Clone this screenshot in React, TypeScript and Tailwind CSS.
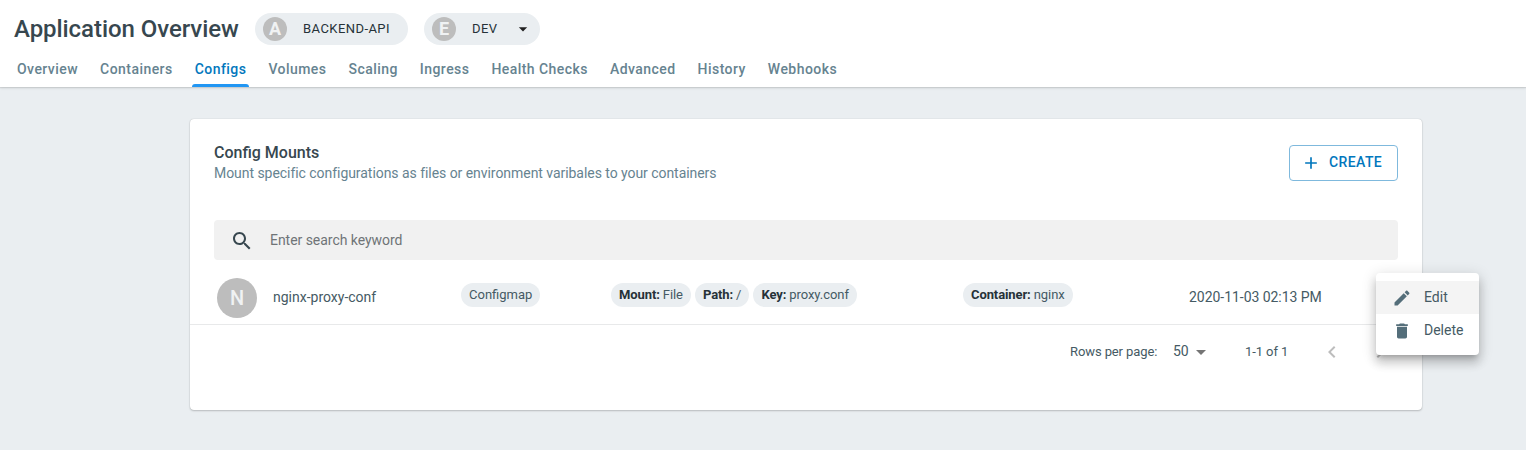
import type { ReactNode } from "react";

const tabs = [
  "Overview",
  "Containers",
  "Configs",
  "Volumes",
  "Scaling",
  "Ingress",
  "Health Checks",
  "Advanced",
  "History",
  "Webhooks",
];

function Icon({ d, className }: { d: string; className: string }) {
  return (
    <svg viewBox="0 0 24 24" fill="currentColor" className={"shrink-0 " + className} aria-hidden="true">
      <path d={d} />
    </svg>
  );
}

const SEARCH =
  "M15.5 14h-.79l-.28-.27C15.41 12.59 16 11.11 16 9.5 16 5.91 13.09 3 9.5 3S3 5.91 3 9.5 5.91 16 9.5 16c1.61 0 3.09-.59 4.23-1.57l.27.28v.79l5 4.99L20.49 19l-4.99-5zm-6 0C7.01 14 5 11.99 5 9.5S7.01 5 9.5 5 14 7.01 14 9.5 11.99 14 9.5 14z";
const ADD = "M19 13h-6v6h-2v-6H5v-2h6V5h2v6h6v2z";
const DROP = "M7 10l5 5 5-5z";
const LEFT = "M15.41 16.59L10.83 12l4.58-4.59L14 6l-6 6 6 6z";
const RIGHT = "M8.59 16.59L13.17 12 8.59 7.41 10 6l6 6-6 6z";
const EDIT =
  "M3 17.25V21h3.75L17.81 9.94l-3.75-3.75L3 17.25zM20.71 7.04c.39-.39.39-1.02 0-1.41l-2.34-2.34c-.39-.39-1.02-.39-1.41 0l-1.83 1.83 3.75 3.75 1.83-1.83z";
const DELETE = "M6 19c0 1.1.9 2 2 2h8c1.1 0 2-.9 2-2V7H6v12zM19 4h-3.5l-1-1h-5l-1 1H5v2h14V4z";

function Chip({ label, children }: { label?: string; children: ReactNode }) {
  return (
    <span className="flex h-6 items-center rounded-full bg-[#eaeef1] px-2 text-[13px] leading-6 text-[#455a64]">
      {label && <b className="mr-[3px] font-bold tracking-[-0.1px] text-[#263238]">{label}</b>}
      <span className={label ? "tracking-[-0.05px]" : ""}>{children}</span>
    </span>
  );
}

function Header() {
  return (
    <header className="relative h-[87px] bg-white shadow-[0_1px_1px_rgba(0,0,0,0.08),0_1px_3px_rgba(0,0,0,0.1)]">
      <div className="flex h-[57px] items-center pl-[14px]">
        <h1 className="w-[241px] text-2xl font-medium tracking-[-0.06px] whitespace-nowrap text-[#37474f]">
          Application Overview
        </h1>
        <div className="flex h-8 w-[153px] items-center rounded-full bg-[#eaeef1] pl-2">
          <span className="flex size-6 items-center justify-center rounded-full bg-[#bdbdbd] text-lg leading-6 font-bold text-[#f0f2f3]">
            A
          </span>
          <span className="ml-4 text-[13px] tracking-[0.44px] text-[#263238]">BACKEND-API</span>
        </div>
        <div className="ml-4 flex h-8 w-[116px] items-center rounded-full bg-[#eaeef1] pl-2">
          <span className="flex size-6 items-center justify-center rounded-full bg-[#bdbdbd] text-lg leading-6 font-bold text-[#f0f2f3]">
            E
          </span>
          <span className="ml-4 w-[41px] text-[13px] tracking-[0.44px] text-[#263238]">DEV</span>
          <Icon d={DROP} className="size-5 text-[#212121]" />
        </div>
      </div>
      <nav className="flex h-[30px] gap-4 pl-[14px]">
        {tabs.map((t) => (
          <a
            key={t}
            className={
              t === "Configs"
                ? "flex flex-col justify-between px-[3px] text-sm font-medium tracking-[0.45px] whitespace-nowrap text-[#0277bd]"
                : "flex flex-col justify-between px-[3px] text-sm font-medium tracking-[0.45px] whitespace-nowrap text-[#668390]"
            }
          >
            <span className="mt-[2px]">{t}</span>
            {t === "Configs" && <span className="-mx-[3px] h-[3px] rounded-t bg-[#2196f3]" />}
          </a>
        ))}
      </nav>
    </header>
  );
}

function Menu() {
  return (
    <div className="absolute top-[273px] left-[1376px] h-[82px] w-[103px] rounded bg-white pt-2 text-sm text-[#455a64] shadow-[0_5px_5px_-3px_rgba(0,0,0,0.2),0_8px_10px_1px_rgba(0,0,0,0.14),0_3px_14px_2px_rgba(0,0,0,0.12)]">
      <div className="flex h-[33px] items-center bg-[#f4f4f4] pl-4">
        <Icon d={EDIT} className="size-5 text-[#546e7a]" />
        <span className="mb-px ml-3 leading-5">Edit</span>
      </div>
      <div className="flex h-[33px] items-center pl-4">
        <Icon d={DELETE} className="size-5 text-[#546e7a]" />
        <span className="mb-[2px] ml-3 leading-5">Delete</span>
      </div>
    </div>
  );
}

export default function App() {
  return (
    <div className="relative h-[450px] w-[1526px] overflow-hidden bg-[#eaeef1] font-['Roboto',sans-serif]">
      <Header />
      <main className="mt-8 ml-[190px] h-[291px] w-[1232px] rounded bg-white shadow-[0_1px_2px_rgba(0,0,0,0.2),0_0_1px_rgba(0,0,0,0.24)]">
        <div className="flex h-[101px] items-start justify-between px-6 pt-[23px]">
          <div>
            <h2 className="text-base leading-[22px] font-medium text-[#37474f]">Config Mounts</h2>
            <p className="-mt-px text-sm leading-5 tracking-[-0.048px] text-[#668390]">
              Mount specific configurations as files or environment varibales to your containers
            </p>
          </div>
          <button className="mt-[3px] flex h-9 w-[109px] items-center rounded border border-[#7fb9dd] pl-[11px] text-sm font-medium tracking-[0.4px] text-[#0277bd]">
            <Icon d={ADD} className="size-5" />
            <span className="mb-[2px] ml-2">CREATE</span>
          </button>
        </div>
        <div className="mx-6 flex h-10 items-center rounded bg-[#f1f1f1] pl-4 text-sm tracking-[-0.04px] text-[#6f7477]">
          <Icon d={SEARCH} className="mt-px size-6 text-[#37474f]" />
          <span className="ml-4">Enter search keyword</span>
        </div>
        <div className="flex h-[65px] border-b border-[#e8e9ea] pl-[27px] text-sm text-[#455a64]">
          <span className="mt-[18px] flex size-10 items-center justify-center rounded-full bg-[#bdbdbd] text-xl font-medium text-[#f0f2f3]">
            N
          </span>
          <span className="mt-[27px] ml-4 w-[188px]">nginx-proxy-conf</span>
          <div className="mt-[23px] flex w-[150px]">
            <Chip>Configmap</Chip>
          </div>
          <div className="mt-[23px] flex w-[352px] gap-1">
            <Chip label="Mount:">File</Chip>
            <Chip label="Path:">/</Chip>
            <Chip label="Key:">proxy.conf</Chip>
          </div>
          <div className="mt-[23px] flex w-[226px]">
            <Chip label="Container:">nginx</Chip>
          </div>
          <span className="mt-[27px] tracking-[-0.04px]">2020-11-03 02:13 PM</span>
        </div>
        <div className="flex h-[54px] items-center pl-[880px] text-[13px] text-[#455a64]">
          <span className="w-[103px] tracking-[-0.1px]">Rows per page:</span>
          <span className="mb-[2px] w-4 text-sm">50</span>
          <Icon d={DROP} className="size-6 text-[#757575]" />
          <span className="ml-8 w-[75px] tracking-[-0.08px]">1-1 of 1</span>
          <Icon d={LEFT} className="size-6 text-[#bdbdbd]" />
          <Icon d={RIGHT} className="ml-6 size-6 text-[#bdbdbd]" />
        </div>
      </main>
      <Menu />
    </div>
  );
}
